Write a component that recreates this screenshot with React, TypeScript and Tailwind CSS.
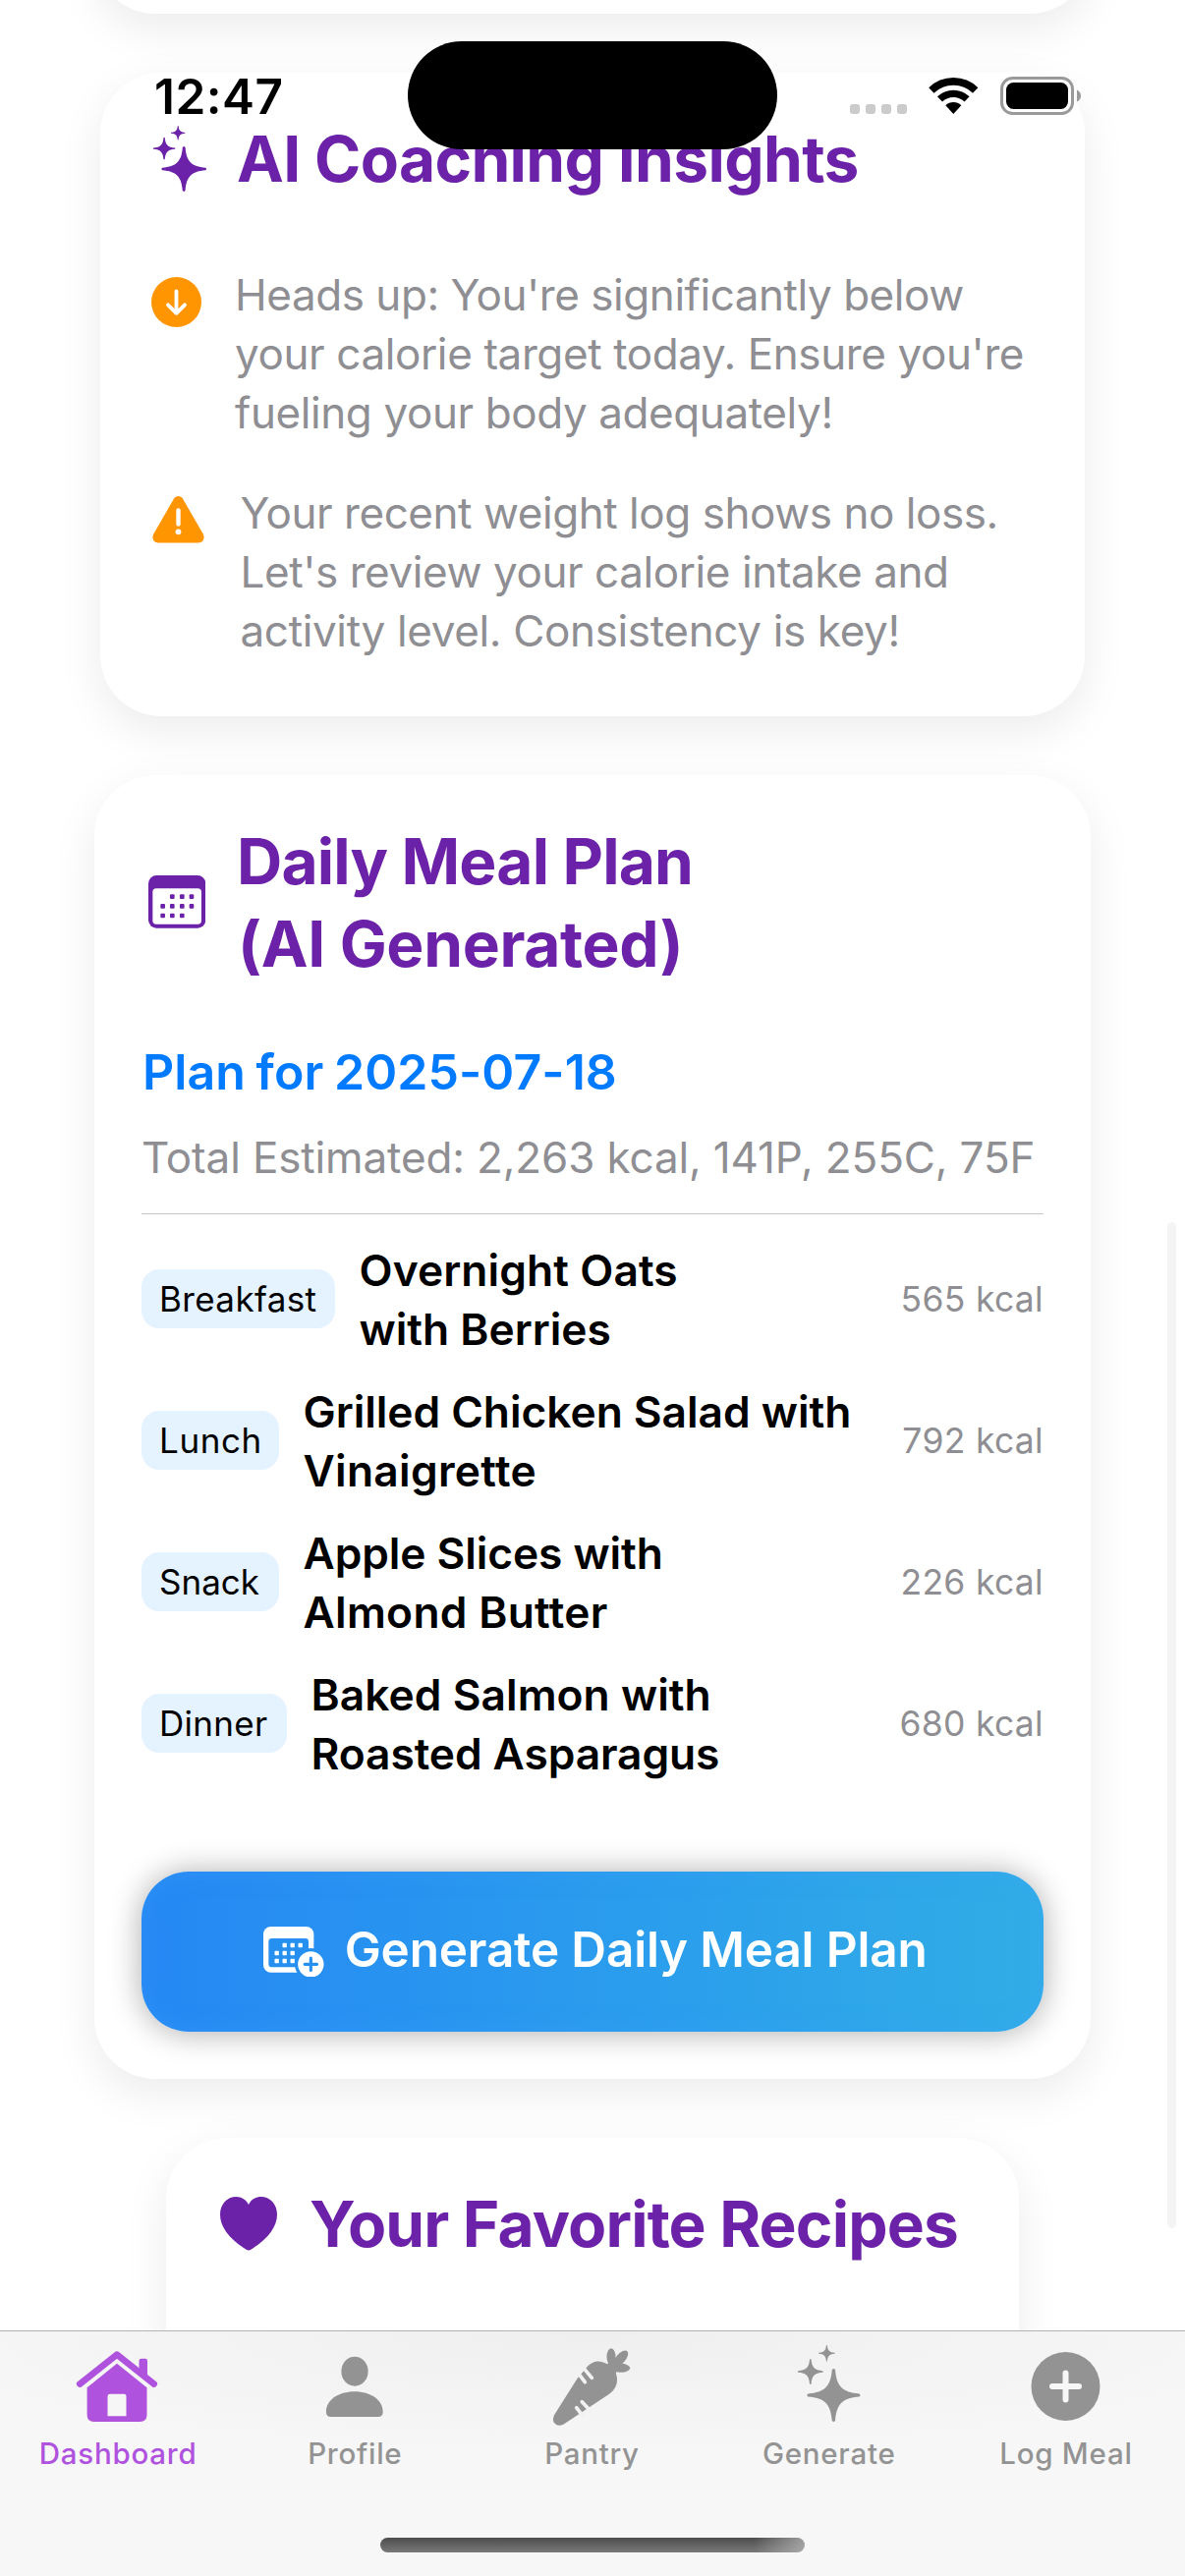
import type { ReactNode } from "react";

const STAR = "M-1.6-26Q0-28 1.6-26C3-9 9-3 26-1.6Q28 0 26 1.6C9 3 3 9 1.6 26Q0 28-1.6 26C-3 9-9 3-26 1.6Q-28 0-26-1.6C-9-3-3-9-1.6-26Z";

function Card({ className, children }: { className: string; children?: ReactNode }) {
  return (
    <section className={`shrink-0 rounded-[62px] bg-white shadow-[0_15px_45px_rgba(0,0,0,0.08)] ${className}`}>
      {children}
    </section>
  );
}

function Line({ className, children }: { className: string; children: ReactNode }) {
  return <span className={`block whitespace-nowrap ${className}`}>{children}</span>;
}

function SparklesIcon() {
  return (
    <svg className="mt-[7px] h-[69px] w-[56px] shrink-0 fill-[#6b21a8]" viewBox="155 127 56 69">
      <path d={STAR} transform="translate(187.2 172) scale(.85)" />
      <path d={STAR} transform="translate(167.1 151.2) scale(.42)" />
      <path d={STAR} transform="translate(181.2 135.3) scale(.27)" />
    </svg>
  );
}

const CALENDAR_DOTS = [
  [106, 98], [136, 98], [165, 98],
  [77, 127], [106, 127], [136, 127], [165, 127],
  [77, 156], [106, 156], [136, 156],
];

function CalendarIcon() {
  return (
    <svg className="h-[53.7px] w-[58.3px] shrink-0 fill-[#6b21a8]" viewBox="33 33 175 161">
      <rect x="33" y="33" width="175" height="161" rx="25" />
      <rect x="46" y="73" width="149" height="109" rx="11" fill="#fff" />
      {CALENDAR_DOTS.map(([x, y]) => (
        <rect key={`${x}-${y}`} x={x - 7} y={y - 7} width="14" height="14" rx="3" />
      ))}
    </svg>
  );
}

const CALENDAR_ADD_DOTS = [
  [89, 105], [113, 105], [137, 105],
  [65, 129], [89, 129], [113, 129],
  [65, 153], [89, 153], [113, 153],
];

function CalendarAddIcon() {
  return (
    <svg className="h-[51.7px] w-[61.7px] shrink-0 fill-white" viewBox="24 48 185 155">
      <rect x="24" y="48" width="154" height="140" rx="23" />
      <rect x="40" y="84" width="122" height="88" rx="10" fill="#2690f1" />
      {CALENDAR_ADD_DOTS.map(([x, y]) => (
        <rect key={`${x}-${y}`} x={x - 6.5} y={y - 6.5} width="13" height="13" rx="2" />
      ))}
      <circle cx="169" cy="163" r="49" fill="#2690f1" />
      <circle cx="169" cy="163" r="39.5" />
      <path d="M169 144.500v37M150.500 163h37" stroke="#2690f1" strokeWidth="9.5" strokeLinecap="round" />
    </svg>
  );
}

function DownCircleIcon() {
  return (
    <svg className="mt-[12px] size-[51px] shrink-0" viewBox="0 0 51 51">
      <circle cx="25.5" cy="25.5" r="25.5" fill="#ff9500" />
      <path d="M25.5 14.5V36M17 28.3l8.5 8.5 8.5-8.5" fill="none" stroke="#fff" strokeWidth="3.8" strokeLinecap="round" strokeLinejoin="round" />
    </svg>
  );
}

function WarningIcon() {
  return (
    <svg className="mt-[13px] h-[48px] w-[53px] shrink-0" viewBox="0 0 53 48">
      <path d="M22 2.6C24-.8 29-.8 31 2.6L51.700 38.500C54 42.700 51.500 47.500 47 47.500H6C1.500 47.500-1 42.700 1.300 38.500Z" fill="#ff9500" />
      <path d="M26.500 14.500V28.500" stroke="#fff" strokeWidth="4.400" strokeLinecap="round" />
      <circle cx="26.500" cy="36.300" r="2.900" fill="#fff" />
    </svg>
  );
}

function HeartIcon() {
  return (
    <svg className="mt-[14px] h-[55px] w-[58px] shrink-0 fill-[#6b21a8]" viewBox="0 0 58 55">
      <path d="M29 54.500C27.500 54.500 26 53.500 24 52C9 42 0 30.500 0 18C0 7.500 7.200 0 16.300 0C22 0 26.500 3 29 8C31.500 3 36 0 41.700 0C50.800 0 58 7.500 58 18C58 30.500 49 42 34 52C32 53.500 30.500 54.500 29 54.500Z" />
    </svg>
  );
}

const MEALS = [
  { tag: "Breakfast", tagClass: "w-[197px] tracking-[0.37px]", kcal: "565 kcal", lines: [["Overnight Oats", "tracking-[0.100px]"], ["with Berries", "tracking-[0px]"]] },
  { tag: "Lunch", tagClass: "w-[140px] tracking-[0.6px]", kcal: "792 kcal", lines: [["Grilled Chicken Salad with", "tracking-[-0.030px]"], ["Vinaigrette", "tracking-[0.300px]"]] },
  { tag: "Snack", tagClass: "w-[140px] tracking-[0px]", kcal: "226 kcal", lines: [["Apple Slices with", "tracking-[-0.080px]"], ["Almond Butter", "tracking-[0.300px]"]] },
  { tag: "Dinner", tagClass: "w-[148px] tracking-[0.3px]", kcal: "680 kcal", lines: [["Baked Salmon with", "tracking-[0.050px]"], ["Roasted Asparagus", "tracking-[-0.080px]"]] },
];

function HouseIcon() {
  return (
    <>
      <path d="M20.200 53.600L58 23.600L95.800 53.600" fill="none" stroke="currentColor" strokeWidth="6.500" strokeLinecap="round" strokeLinejoin="round" />
      <path d="M80.500 30q0-2.300 2.300-2.300h3.900q2.300 0 2.300 2.300V49L80.500 42.500Z" />
      <path d="M58 32.700L88.500 57.300V85q0 7-7 7H34.600q-7 0-7-7V57.300Z" />
      <path d="M48.500 86.300V66q0-2.300 2.300-2.300h14.400q2.300 0 2.300 2.300V86.300Z" fill="#f6f6f6" />
    </>
  );
}

function PersonIcon() {
  return (
    <>
      <ellipse cx="59" cy="40.700" rx="13.600" ry="15" />
      <path d="M29.900 82C30 70 42 61.300 58.800 61.300S87.700 70 87.700 82q0 5-5 5H34.900q-5 0-5-5Z" />
    </>
  );
}

function CarrotIcon() {
  return (
    <g transform="translate(7 7) scale(.3333)">
      <path d="M42 235L113 122L145 85Q170 60 203 78L230 105Q245 145 208 172L70 263Q50 272 40 255Q37 245 42 235Z" />
      <ellipse cx="216" cy="57" rx="13.500" ry="26" />
      <ellipse cx="245" cy="62" rx="30" ry="14.500" transform="rotate(-48 245 62)" />
      <ellipse cx="246" cy="91" rx="27.500" ry="13.500" />
      <path d="M200 82L225 65L240 80L230 108Z" />
      <path d="M115 106L136 134M130 89L157 121M130 238L110 212M153 222L127 194" stroke="#f2f2f2" strokeWidth="11" strokeLinecap="round" />
    </g>
  );
}

function GenerateIcon() {
  return (
    <>
      <path d={STAR} transform="translate(64.400 65)" />
      <path d={STAR} transform="translate(40.800 41) scale(.48)" />
      <path d={STAR} transform="translate(57.400 22.300) scale(.31)" />
    </>
  );
}

function PlusCircleIcon() {
  return (
    <>
      <circle cx="59.500" cy="56" r="35" />
      <path d="M59.500 42.500V69.500M46 56H73" stroke="#f7f7f7" strokeWidth="6" strokeLinecap="round" />
    </>
  );
}

const TABS = [
  { label: "Dashboard", icon: <HouseIcon />, className: "text-[#af52de]" },
  { label: "Profile", icon: <PersonIcon />, className: "text-[#939393]" },
  { label: "Pantry", icon: <CarrotIcon />, className: "text-[#939393]" },
  { label: "Generate", icon: <GenerateIcon />, className: "text-[#939393]" },
  { label: "Log Meal", icon: <PlusCircleIcon />, className: "text-[#939393]" },
];

function StatusBar() {
  return (
    <div className="absolute inset-x-0 top-0 h-[160px]">
      <div className="absolute top-[42px] left-[415px] h-[110px] w-[376px] rounded-full bg-black" />
      <div className="flex h-[118px] items-end">
        <div className="ml-[157px] w-[708px] text-[49.500px] leading-[40px] font-semibold tracking-[0.500px] text-black">12:47</div>
        <div className="mb-[2px] flex w-[80px] gap-[6px]">
          {[0, 1, 2, 3].map((i) => (
            <span key={i} className="size-[10px] rounded-[3px] bg-[#cbcbcb]" />
          ))}
        </div>
        <svg className="mb-[2px] h-[37px] w-[51px] shrink-0" viewBox="0 0 51 37">
          <g fill="none" stroke="#000">
            <path d="M2.900 13A32.300 32.300 0 0 1 47.700 13" strokeWidth="7.700" />
            <path d="M11.500 21.900A19.900 19.900 0 0 1 39.100 21.900" strokeWidth="7.300" />
          </g>
          <path d="M25.300 37L17.300 28.300A11.500 11.500 0 0 1 33.300 28.300Z" />
        </svg>
        <svg className="mb-px ml-[22px] h-[39px] w-[83px] shrink-0" viewBox="0 0 83 39">
          <rect x="1.500" y="1.500" width="72" height="36" rx="11" fill="none" stroke="#9a9a9a" strokeWidth="3" />
          <rect x="6" y="6" width="63" height="27" rx="7.500" />
          <path d="M78 13.500Q82 15.500 82 19.500T78 25.500Z" fill="#9a9a9a" />
        </svg>
      </div>
    </div>
  );
}

export default function App() {
  return (
    <div className="relative flex h-[2622px] w-[1206px] flex-col overflow-hidden bg-white font-['Inter',sans-serif]">
      <main className="relative flex h-[2372px] shrink-0 flex-col items-center gap-[60px] overflow-hidden">
        <Card className="-mt-[286px] h-[300px] w-[1014px]" />

        <Card className="h-[655px] w-[1002px] pt-[46px] pl-[52px]">
          <div className="flex items-start">
            <div className="w-[87px] pl-px">
              <SparklesIcon />
            </div>
            <h2 className="text-[64px] leading-[84px] font-bold whitespace-nowrap tracking-[-0.650px] text-[#6b21a8]">AI Coaching Insights</h2>
          </div>
          <div className="mt-[66px] flex flex-col gap-[42px] text-[44px] leading-[60px] text-[#8e8e93]">
            <div className="flex items-start gap-[34px]">
              <DownCircleIcon />
              <p>
                <Line className="tracking-[-0.450px]">Heads up: You're significantly below</Line>
                <Line className="tracking-[-0.390px]">your calorie target today. Ensure you're</Line>
                <Line className="tracking-[-0.400px]">fueling your body adequately!</Line>
              </p>
            </div>
            <div className="flex items-start gap-[36.500px] pl-px">
              <WarningIcon />
              <p>
                <Line className="tracking-[-0.450px]">Your recent weight log shows no loss.</Line>
                <Line className="tracking-[-0.420px]">Let's review your calorie intake and</Line>
                <Line className="tracking-[-0.350px]">activity level. Consistency is key!</Line>
              </p>
            </div>
          </div>
        </Card>

        <Card className="h-[1327px] w-[1014px] px-[48px] pt-[46px]">
          <div className="flex items-center">
            <div className="w-[97px] pb-[2px] pl-[7px]">
              <CalendarIcon />
            </div>
            <h2 className="text-[64px] leading-[84px] font-bold text-[#6b21a8]">
              <Line className="tracking-[-0.810px]">Daily Meal Plan</Line>
              <Line className="pl-px tracking-[-0.340px]">(AI Generated)</Line>
            </h2>
          </div>
          <h3 className="mt-[55px] pl-px text-[50px] leading-[66px] font-semibold tracking-[0.070px] [word-spacing:-2px] text-[#007aff]">Plan for 2025-07-18</h3>
          <p className="mt-[24px] text-[44px] leading-[60px] whitespace-nowrap tracking-[-0.130px] text-[#8e8e93]">
            Total Estimated: 2,263 kcal, 141P, 255C, 75F
          </p>
          <div className="mt-[27px] h-px bg-[#c6c6c8]" />
          <ul className="mt-[26px] flex flex-col gap-[24px]">
            {MEALS.map((meal) => (
              <li key={meal.tag} className="flex h-[120px] items-center">
                <span className={`rounded-[18px] bg-[#e5f2ff] pl-[18px] text-[35px] leading-[60px] text-black ${meal.tagClass}`}>{meal.tag}</span>
                <span className="ml-[24.500px] translate-y-px text-[44.300px] leading-[60px] font-semibold text-black">
                  {meal.lines.map(([text, tracking]) => (
                    <Line key={text} className={tracking}>{text}</Line>
                  ))}
                </span>
                <span className="ml-auto translate-y-px text-[35.500px] leading-[60px] tracking-[0.300px] text-[#8e8e93]">{meal.kcal}</span>
              </li>
            ))}
          </ul>
          <button className="mt-[91px] flex h-[163px] w-full items-center gap-[21px] rounded-[48px] bg-linear-to-r from-[#2688f4] to-[#32ade6] pl-[124px] shadow-[0_1px_32px_rgba(0,0,0,0.330),inset_0_0_24px_rgba(60,160,255,0.350)]">
            <CalendarAddIcon />
            <span className="-translate-y-[3px] text-[49.500px] leading-[66px] font-semibold whitespace-nowrap tracking-[-0.180px] text-white">Generate Daily Meal Plan</span>
          </button>
        </Card>

        <Card className="h-[400px] w-[868px] pt-[46px] pl-[55px]">
          <div className="flex items-start gap-[33px]">
            <HeartIcon />
            <h2 className="text-[64px] leading-[84px] font-bold whitespace-nowrap tracking-[-0.850px] text-[#6b21a8]">Your Favorite Recipes</h2>
          </div>
        </Card>

        <div className="absolute top-[1244px] right-[9px] h-[1024px] w-[9px] rounded-full bg-[#f4f4f4]" />
      </main>

      <nav className="relative h-[250px] shrink-0 border-t border-[#b2b2b2] bg-[radial-gradient(ellipse_60%_50%_at_50%_0%,#efefef,#f7f7f7)]">
        <div className="grid grid-cols-5">
          {TABS.map((tab) => (
            <div key={tab.label} className={`flex flex-col items-center ${tab.className}`}>
              <svg className="h-[107px] w-[120px] fill-current" viewBox="0 0 120 107">
                {tab.icon}
              </svg>
              <span className="-translate-x-[0.500px] -translate-y-px text-[29.500px] leading-[36px] font-medium tracking-[0.750px]">{tab.label}</span>
            </div>
          ))}
        </div>
        <div className="mx-auto mt-[67px] h-[15px] w-[432px] rounded-full bg-[linear-gradient(to_right,transparent_88%,rgba(190,190,190,0.700)),linear-gradient(to_bottom,#4d4d4d,#787878)]" />
      </nav>

      <StatusBar />
    </div>
  );
}
